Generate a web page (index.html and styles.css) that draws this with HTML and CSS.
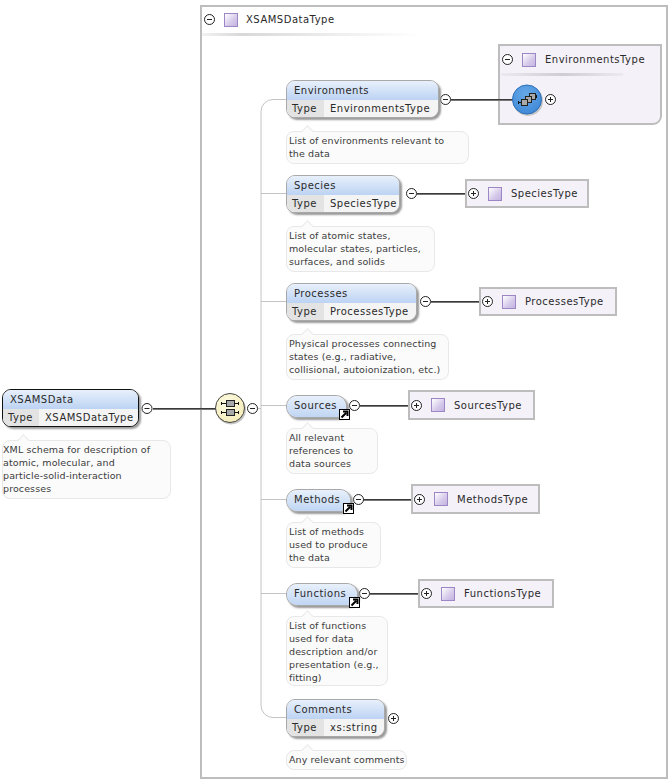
FILE: index.html
```html
<!DOCTYPE html>
<html lang="en">
<head>
<meta charset="utf-8">
<title>XSAMSData</title>
<link rel="stylesheet" href="styles.css">
</head>
<body>
<main class="canvas">
  <section class="type-frame frame-main"></section>
  <div class="rule rule-main"></div>
  <div class="type-title title-main"><span class="swatch"></span><span>XSAMSDataType</span></div>

  <section class="type-frame frame-env"></section>
  <div class="rule rule-env"></div>
  <div class="type-title title-env"><span class="swatch"></span><span>EnvironmentsType</span></div>

  <div class="type-box box-species"><span class="swatch"></span><span>SpeciesType</span></div>
  <div class="type-box box-processes"><span class="swatch"></span><span>ProcessesType</span></div>
  <div class="type-box box-sources"><span class="swatch"></span><span>SourcesType</span></div>
  <div class="type-box box-methods"><span class="swatch"></span><span>MethodsType</span></div>
  <div class="type-box box-functions"><span class="swatch"></span><span>FunctionsType</span></div>

  <svg class="wires" width="672" height="784" viewBox="0 0 672 784" aria-hidden="true">
    <defs>
      <radialGradient id="cream" cx="40%" cy="35%" r="70%"><stop offset="0" stop-color="#fdfbe4"/><stop offset="1" stop-color="#f5ecb8"/></radialGradient>
      <radialGradient id="blue" cx="45%" cy="30%" r="75%"><stop offset="0" stop-color="#66a9e8"/><stop offset="1" stop-color="#3f87d6"/></radialGradient>
    </defs>
    <g class="tree">
      <path d="M286 99.500H273a12 12 0 0 0-12 12V705.500a12 12 0 0 0 12 12H286"/>
      <path d="M261 193.500H286M261 301.500H286M261 405.500H286M261 499.500H286M261 593.500H286M258 408.500H261"/>
    </g>
    <path class="link-shade" d="M153 409.500H216M451 100.500H513M417 194.500H465M431 302.500H479M360 406.500H408M363 500.500H411M370 594.500H418"/>
    <path class="link" d="M153 408.500H216M451 99.500H513M417 193.500H465M431 301.500H479M360 405.500H408M363 499.500H411M370 593.500H418"/>
    <g class="shadow"><circle cx="231" cy="409.500" r="15"/><circle cx="528" cy="101" r="15"/></g>
    <g class="seq">
      <circle cx="230" cy="408" r="14.500" fill="url(#cream)"/>
      <path class="stub" d="M221 403.500H239M221 412.500H239"/>
      <path class="stub" d="M221.500 402v3M238.500 402v3M221.500 411v3M238.500 411v3"/>
      <rect x="226.500" y="400.500" width="8" height="6"/>
      <rect x="226.500" y="409.500" width="8" height="6"/>
    </g>
    <g class="choice">
      <circle cx="527" cy="99.500" r="14.500" fill="url(#blue)"/>
      <path class="stub" d="M518 102.500h5M531 96.500h6"/>
      <path class="stub" d="M518.500 101v3M536.500 95v3"/>
      <rect x="529.500" y="93.500" width="6" height="6"/>
      <rect x="525.500" y="96.500" width="6" height="6"/>
      <rect x="521.500" y="99.500" width="6" height="6"/>
    </g>
    <g class="toggle">
      <circle cx="147" cy="408.500" r="5"/><path d="M144.500 408.500h5"/>
      <circle cx="252.500" cy="408.500" r="5"/><path d="M250 408.500h5"/>
      <circle cx="209.500" cy="19.500" r="5"/><path d="M207 19.500h5"/>
      <circle cx="445.500" cy="99.500" r="5"/><path d="M443 99.500h5"/>
      <circle cx="507.500" cy="59.500" r="5"/><path d="M505 59.500h5"/>
      <circle cx="411.500" cy="193.500" r="5"/><path d="M409 193.500h5"/>
      <circle cx="425.500" cy="301.500" r="5"/><path d="M423 301.500h5"/>
      <circle cx="354.500" cy="405.500" r="5"/><path d="M352 405.500h5"/>
      <circle cx="358.500" cy="499.500" r="5"/><path d="M356 499.500h5"/>
      <circle cx="364.500" cy="593.500" r="5"/><path d="M362 593.500h5"/>
      <circle cx="550.500" cy="99.500" r="5"/><path d="M548 99.500h5M550.500 97v5"/>
      <circle cx="473.500" cy="193.500" r="5"/><path d="M471 193.500h5M473.500 191v5"/>
      <circle cx="487.500" cy="301.500" r="5"/><path d="M485 301.500h5M487.500 299v5"/>
      <circle cx="416.500" cy="405.500" r="5"/><path d="M414 405.500h5M416.500 403v5"/>
      <circle cx="419.500" cy="499.500" r="5"/><path d="M417 499.500h5M419.500 497v5"/>
      <circle cx="426.500" cy="593.500" r="5"/><path d="M424 593.500h5M426.500 591v5"/>
      <circle cx="393.500" cy="718.500" r="5"/><path d="M391 718.500h5M393.500 716v5"/>
    </g>
  </svg>

  <article class="el el-root">
    <h2 class="el-name">XSAMSData</h2>
    <div class="el-type"><span class="type-key">Type</span><span class="type-val">XSAMSDataType</span></div>
  </article>
  <p class="note note-root">XML schema for description of<br>atomic, molecular, and<br>particle-solid-interaction<br>processes</p>

  <article class="el el-env">
    <h2 class="el-name">Environments</h2>
    <div class="el-type"><span class="type-key">Type</span><span class="type-val">EnvironmentsType</span></div>
  </article>
  <p class="note note-env">List of environments relevant to<br>the data</p>

  <article class="el el-species">
    <h2 class="el-name">Species</h2>
    <div class="el-type"><span class="type-key">Type</span><span class="type-val">SpeciesType</span></div>
  </article>
  <p class="note note-species">List of atomic states,<br>molecular states, particles,<br>surfaces, and solids</p>

  <article class="el el-processes">
    <h2 class="el-name">Processes</h2>
    <div class="el-type"><span class="type-key">Type</span><span class="type-val">ProcessesType</span></div>
  </article>
  <p class="note note-processes">Physical processes connecting<br>states (e.g., radiative,<br>collisional, autoionization, etc.)</p>

  <article class="el pill el-sources"><h2 class="el-name">Sources</h2></article>
  <span class="ref ref-sources"><svg width="11" height="11" viewBox="0 0 11 11"><path d="M2.500 8.500L7 4M4 2.500H8.500V7"/></svg></span>
  <p class="note note-sources">All relevant<br>references to<br>data sources</p>

  <article class="el pill el-methods"><h2 class="el-name">Methods</h2></article>
  <span class="ref ref-methods"><svg width="11" height="11" viewBox="0 0 11 11"><path d="M2.500 8.500L7 4M4 2.500H8.500V7"/></svg></span>
  <p class="note note-methods">List of methods<br>used to produce<br>the data</p>

  <article class="el pill el-functions"><h2 class="el-name">Functions</h2></article>
  <span class="ref ref-functions"><svg width="11" height="11" viewBox="0 0 11 11"><path d="M2.500 8.500L7 4M4 2.500H8.500V7"/></svg></span>
  <p class="note note-functions">List of functions<br>used for data<br>description and/or<br>presentation (e.g.,<br>fitting)</p>

  <article class="el el-comments">
    <h2 class="el-name">Comments</h2>
    <div class="el-type"><span class="type-key">Type</span><span class="type-val">xs:string</span></div>
  </article>
  <p class="note note-comments">Any relevant comments</p>
</main>
</body>
</html>
```
FILE: styles.css
```css
* { box-sizing: border-box; }
html, body { margin: 0; background: #fff; }
.canvas {
  position: relative;
  width: 672px;
  height: 784px;
  overflow: hidden;
  font-family: "DejaVu Sans", sans-serif;
  font-size: 10px;
  letter-spacing: 0.5px;
  color: #2a2a2a;
}
.canvas > * { position: absolute; margin: 0; }

/* type frames */
.type-frame { border: 2px solid #bdbdbd; }
.frame-main { left: 200px; top: 5px; width: 468px; height: 774px; background: #fff; }
.frame-env { left: 498px; top: 44px; width: 164px; height: 81px; background: #f4f1f9; border-bottom-right-radius: 9px; }
.rule { height: 3px; }
.rule-main { left: 202px; top: 33px; width: 220px; background: linear-gradient(90deg, #f2f2f2, #d8d8d8 18%, #f0f0f0 65%, #fff); }
.rule-env { left: 501px; top: 73px; width: 122px; height: 3px; background: linear-gradient(90deg, #ece9f2, #cfcdd3 50%, #ece9f2); }
.type-title { display: flex; align-items: center; gap: 8px; height: 15px; }
.title-main { left: 224px; top: 12px; }
.title-env { left: 522px; top: 52px; gap: 9px; }
.swatch {
  display: block;
  width: 14px;
  height: 14px;
  border: 1px solid #9d86c6;
  background: linear-gradient(135deg, #fff, #d5c9ea 60%, #c3b3e0);
}
.type-box {
  display: flex;
  align-items: center;
  gap: 9px;
  height: 29px;
  padding-left: 21px;
  border: 2px solid #bdbdbd;
  background: #f4f1f9;
}
.box-species { left: 465px; top: 179px; width: 124px; }
.box-processes { left: 479px; top: 287px; width: 138px; }
.box-sources { left: 408px; top: 390px; width: 127px; height: 30px; }
.box-methods { left: 411px; top: 484px; width: 129px; height: 30px; }
.box-functions { left: 418px; top: 579px; width: 136px; }

/* connectors */
.wires { left: 0; top: 0; }
.wires path, .wires circle, .wires rect { fill: none; }
.tree path { stroke: #c4c4c4; stroke-width: 1; }
.wires .link { stroke: #3a3a3a; stroke-width: 1; }
.wires .link-shade { stroke: #777; stroke-width: 1; }
.wires .shadow circle { fill: #c4c4c4; }
.wires .seq circle { fill: url(#cream); stroke: #444; stroke-width: 1; }
.wires .choice circle { fill: url(#blue); stroke: #2c6fb8; stroke-width: 1; }
.seq rect, .choice rect { stroke: #222; stroke-width: 1; }
.wires .seq rect, .wires .choice rect { fill: #a9a9a9; }
.stub { stroke: #111; stroke-width: 1; }
.wires .toggle circle { fill: #fff; stroke: #222; stroke-width: 1; }
.toggle path { stroke: #222; stroke-width: 1; }

/* element nodes */
.el {
  overflow: hidden;
  border: 1px solid #a8a8a8;
  border-radius: 9px;
  background: #ececec;
  box-shadow: 2px 2px 2px #9a9a9a;
}
.el-name {
  margin: 0;
  height: 19px;
  padding: 3px 0 0 7px;
  font-size: 10px;
  font-weight: 400;
  line-height: 13px;
  color: #2a2a2a;
  background: linear-gradient(#e8f0fb, #bcd3f3);
}
.el-type { display: flex; height: 18px; line-height: 17px; background: #f4f4f4; }
.type-key { width: 37px; padding-left: 5px; background: #e3e3e3; }
.type-val { padding-left: 6px; }
.pill { border-radius: 11px; }
.pill .el-name { height: 23px; padding-top: 3px; }
.el-root { left: 2px; top: 389px; width: 137px; height: 38px; border: 1px solid #111; }
.el-root .type-key { width: 36px; }
.el-env { left: 286px; top: 80px; width: 153px; height: 38px; }
.el-species { left: 286px; top: 175px; width: 114px; height: 38px; }
.el-processes { left: 286px; top: 283px; width: 131px; height: 38px; }
.el-sources { left: 286px; top: 395px; width: 61px; height: 23px; }
.el-methods { left: 286px; top: 489px; width: 65px; height: 23px; }
.el-functions { left: 286px; top: 583px; width: 72px; height: 23px; }
.el-comments { left: 286px; top: 699px; width: 99px; height: 38px; }

.ref {
  display: block;
  width: 11px;
  height: 11px;
  background: #fff;
  border: 1px solid #000;
}
.ref svg { display: block; margin: -1px; }
.ref path { fill: none; stroke: #000; stroke-width: 2; }
.ref-sources { left: 339px; top: 409px; }
.ref-methods { left: 343px; top: 503px; }
.ref-functions { left: 349px; top: 597px; }

/* annotations */
.note {
  padding: 2px 0 0 2px;
  font-size: 9.500px;
  letter-spacing: 0.1px;
  line-height: 13px;
  color: #3c3c3c;
  white-space: nowrap;
  background: #fbfbfb;
  border: 1px solid #e8e8e8;
  border-radius: 8px;
}
.note::before {
  content: "";
  position: absolute;
  left: 16px;
  top: -5px;
  width: 8px;
  height: 8px;
  background: #fbfbfb;
  border-top: 1px solid #e8e8e8;
  border-left: 1px solid #e8e8e8;
  transform: rotate(45deg);
}
.note-root { left: 2px; top: 440px; width: 169px; height: 59px; padding-left: 0; }
.note-env { left: 286px; top: 131px; width: 183px; height: 33px; }
.note-species { left: 286px; top: 226px; width: 149px; height: 46px; }
.note-processes { left: 286px; top: 334px; width: 163px; height: 46px; }
.note-sources { left: 286px; top: 428px; width: 92px; height: 46px; }
.note-methods { left: 286px; top: 522px; width: 95px; height: 46px; }
.note-functions { left: 286px; top: 616px; width: 102px; height: 70px; }
.note-comments { left: 286px; top: 750px; width: 121px; height: 20px; }
```
